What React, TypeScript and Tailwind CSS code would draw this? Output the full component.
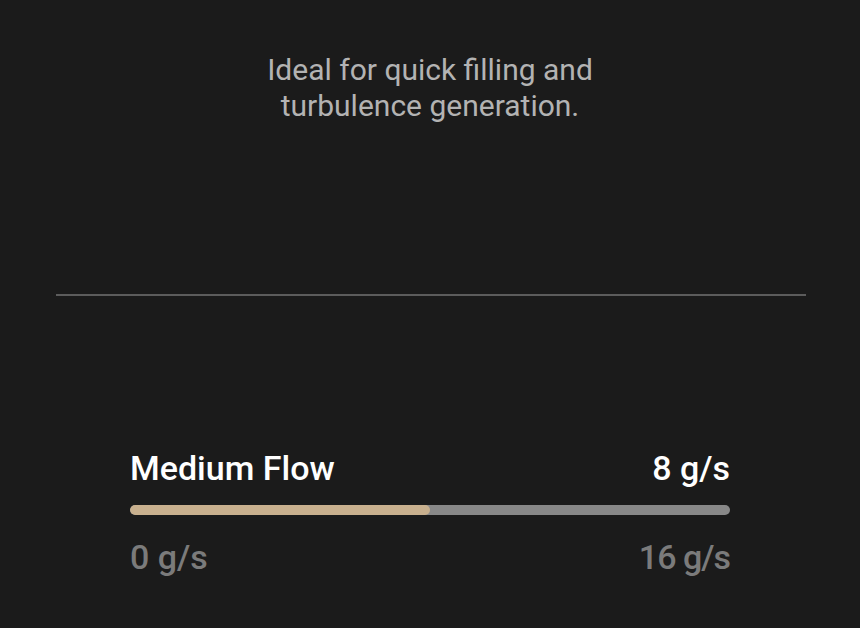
export default function App() {
  const value = 8
  const max = 16
  const pct = (value / max) * 100

  return (
    <div className="w-[860px] h-[628px] bg-[#1b1b1b] flex flex-col font-['Roboto',sans-serif] overflow-hidden">
      <p className="pt-[52px] text-center text-[30px] leading-[36px] text-[#b3b3b3]">
        Ideal for quick filling and
        <br />
        turbulence generation.
      </p>

      <div className="mt-[170px] ml-[56px] w-[750px] h-[2px] bg-[#5c5c5c]" />

      <div className="mt-[152px] mx-auto w-[600px] flex flex-col">
        <div className="flex items-center justify-between text-[34px] leading-[40px] font-medium text-white">
          <span>Medium Flow</span>
          <span>{value} g/s</span>
        </div>
        <div className="mt-[17px] h-[10px] rounded-full bg-[#888888] overflow-hidden">
          <div className="h-full rounded-full bg-[#c8b08e]" style={{ width: `${pct}%` }} />
        </div>
        <div className="mt-[22px] flex items-center justify-between text-[34px] leading-[40px] font-medium text-[#7b7b7b]">
          <span>0 g/s</span>
          <span className="tracking-[-1px]">{max} g/s</span>
        </div>
      </div>
    </div>
  )
}
